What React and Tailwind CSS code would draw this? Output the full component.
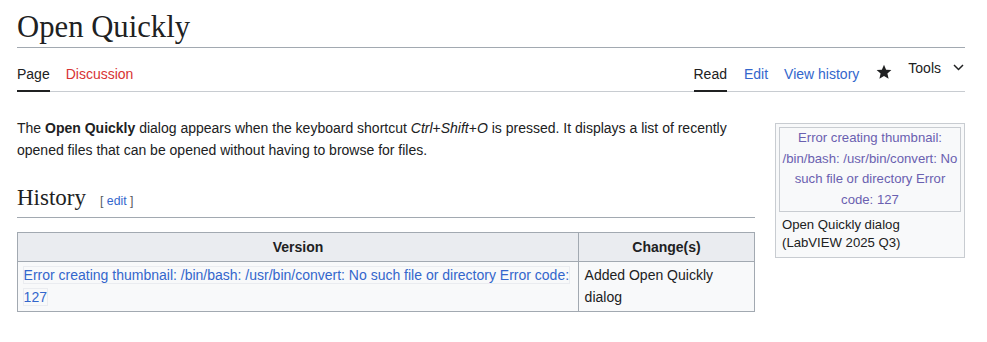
import React from "react";

function Star() {
  return (
    <svg width="16" height="16" viewBox="0 0 20 20" className="block">
      <path
        fill="#202122"
        d="M10 1l2.65 6.1 6.6.55-5 4.36 1.5 6.49L10 15.09 4.25 18.5l1.5-6.49-5-4.36 6.6-.55z"
      />
    </svg>
  );
}

function Chevron() {
  return (
    <svg width="11" height="7" viewBox="0 0 11 7" className="block">
      <path d="M1 1l4.5 4.5L10 1" fill="none" stroke="#202122" strokeWidth="1.5" />
    </svg>
  );
}

export default function App() {
  return (
    <div className="w-[987px] h-[342px] bg-white text-[#202122] font-['Liberation_Sans',Arial,sans-serif] overflow-hidden">
      <div className="pl-[17px] pr-[22px]">
        <h1 className="font-['Liberation_Serif','Times_New_Roman',serif] text-[30.7px] leading-[39px] pt-[8px] border-b border-[#a2a9b1]">
          Open Quickly
        </h1>

        {/* tabs */}
        <div className="flex justify-between h-[44px] border-b border-[#c8ccd1] text-[14px] leading-[20px]">
          <div className="flex items-end gap-[16px]">
            <div className="-mb-px pb-[6px] border-b-2 border-[#202122]">Page</div>
            <div className="-mb-px pb-[6px] border-b-2 border-transparent text-[#d73333]">Discussion</div>
          </div>
          <div className="flex items-end">
            <div className="-mb-px pb-[6px] border-b-2 border-[#202122]">Read</div>
            <div className="-mb-px pb-[6px] border-b-2 border-transparent text-[#3366cc] ml-[17px]">Edit</div>
            <div className="-mb-px pb-[6px] border-b-2 border-transparent text-[#3366cc] ml-[16px]">View history</div>
            <div className="ml-[17px] mb-[11px]">
              <Star />
            </div>
            <div className="self-start mt-[10px] ml-[16px] flex items-center">
              <span>Tools</span>
              <span className="ml-[12px] mr-[1px] mt-[-1px]">
                <Chevron />
              </span>
            </div>
          </div>
        </div>

        {/* content */}
        <div className="flex gap-[20px] pt-[22px] text-[14px] leading-[22px]">
          <div className="w-[738px] shrink-0">
            <p className="mt-[3px]">
              The <b>Open Quickly</b> dialog appears when the keyboard shortcut <i>Ctrl</i>+<i>Shift</i>+<i>O</i> is
              pressed. It displays a list of recently opened files that can be opened without having to browse for
              files.
            </p>
            <div className="flex items-baseline mt-[22px] pb-[4px] border-b border-[#a2a9b1]">
              <h2 className="font-['Liberation_Serif','Times_New_Roman',serif] text-[23px] leading-[30px]">History</h2>
              <span className="ml-[14px] text-[12.25px] text-[#54595d]">
                [ <span className="text-[#3366cc]">edit</span> ]
              </span>
            </div>
            <table className="mt-[14px] w-[738px] table-fixed border-collapse border border-[#a2a9b1] bg-[#f8f9fa]">
              <colgroup>
                <col className="w-[561px]" />
                <col />
              </colgroup>
              <thead>
                <tr className="bg-[#eaecf0]">
                  <th className="border border-[#a2a9b1] px-[5.6px] py-[2.8px] text-center font-bold">Version</th>
                  <th className="border border-[#a2a9b1] px-[5.6px] py-[2.8px] text-center font-bold">Change(s)</th>
                </tr>
              </thead>
              <tbody>
                <tr>
                  <td className="border border-[#a2a9b1] px-[5.6px] py-[2.8px] align-top">
                    <span className="text-[#3366cc] outline outline-[#eaecf0]">
                      Error creating thumbnail: /bin/bash: /usr/bin/convert: No such file or directory Error code: 127
                    </span>
                  </td>
                  <td className="border border-[#a2a9b1] px-[5.6px] py-[2.8px] align-top">Added Open Quickly dialog</td>
                </tr>
              </tbody>
            </table>
          </div>

          <div className="w-[190px] shrink-0 self-start mt-[9px] border border-[#c8ccd1] bg-[#f8f9fa] p-[3px]">
            <div className="border border-[#c8ccd1] text-center text-[13.16px] leading-[20.7px] text-[#6a60b0]">
              Error creating thumbnail: /bin/bash: /usr/bin/convert: No such file or directory Error code: 127
            </div>
            <div className="px-[3px] pt-[4px] pb-[2px] text-[13.16px] leading-[18px] text-[#202122]">
              Open Quickly dialog (LabVIEW 2025 Q3)
            </div>
          </div>
        </div>
      </div>
    </div>
  );
}
